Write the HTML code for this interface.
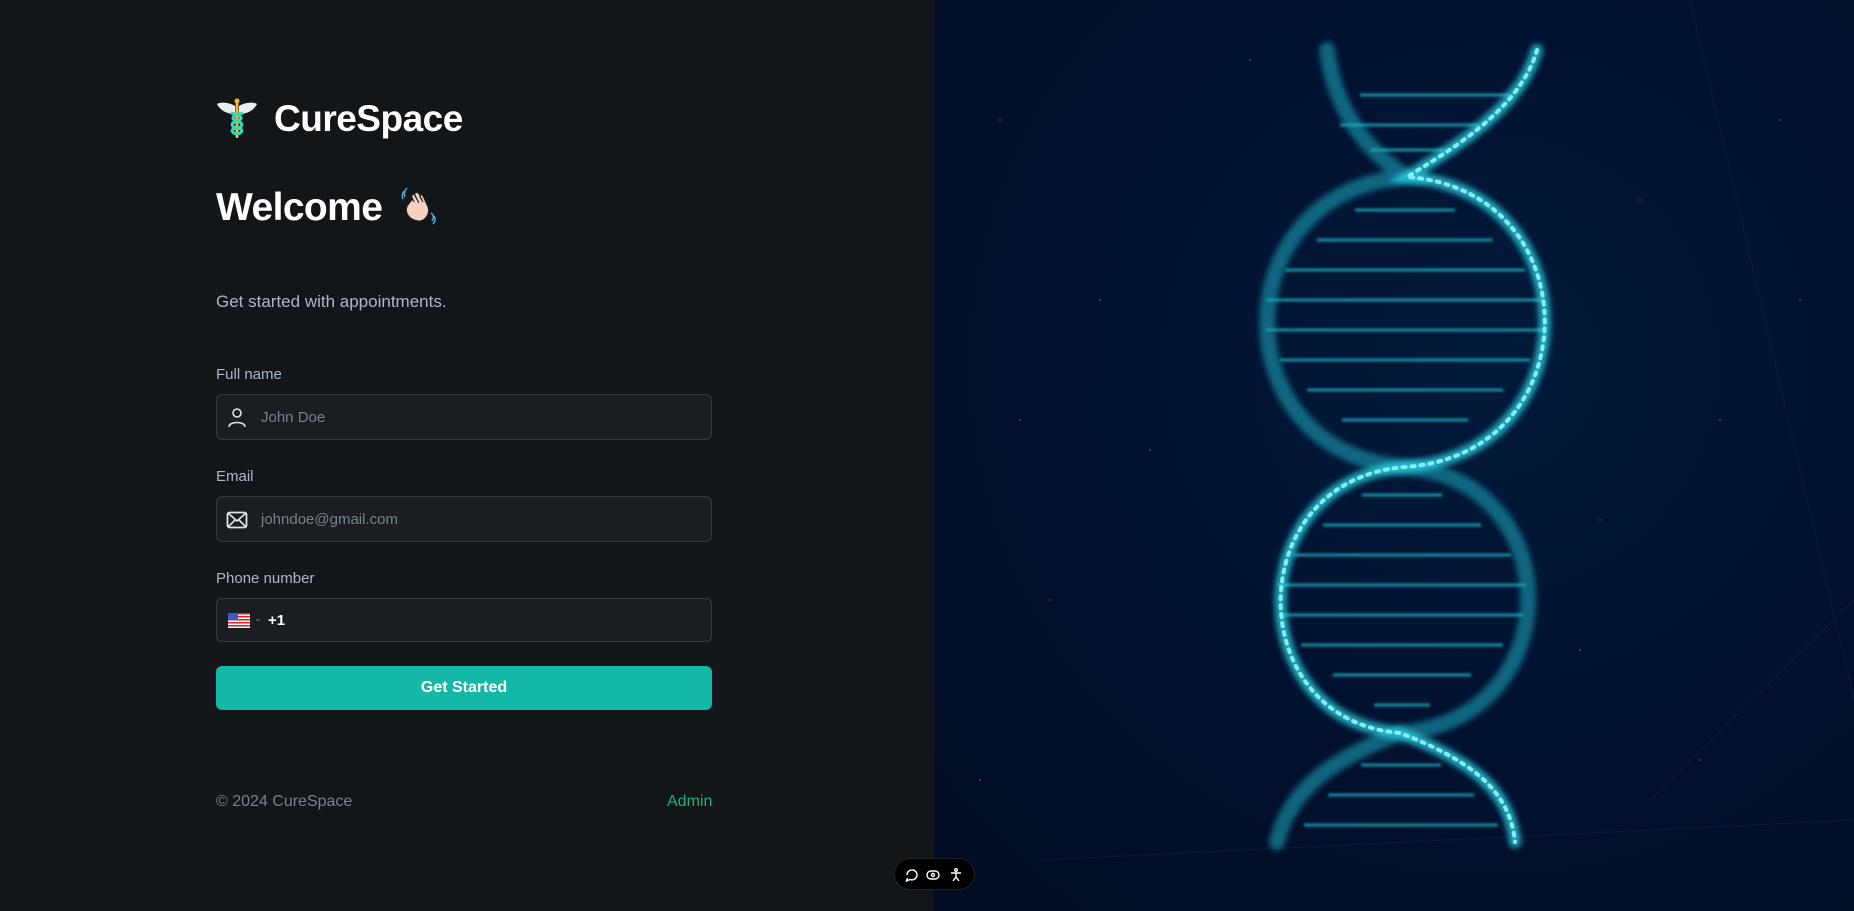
<!DOCTYPE html>
<html><head><meta charset="utf-8">
<style>
*{margin:0;padding:0;box-sizing:border-box}
body{width:1854px;height:911px;overflow:hidden;background:#131619;font-family:"Liberation Sans",sans-serif;position:relative}
.left{position:absolute;left:0;top:0;width:934px;height:911px;background:#131619}
.right{position:absolute;left:934px;top:0;width:920px;height:911px;background:radial-gradient(ellipse at 60% 40%,#021a3a 0%,#011230 45%,#010c22 100%)}
.abs{position:absolute}
.logo{left:216px;top:98px;display:flex;align-items:center}
.logo span{color:#fff;font-size:37px;font-weight:bold;margin-left:16px;letter-spacing:-0.5px}
.welcome{left:216px;top:186px;color:#fff;font-size:39px;font-weight:bold;letter-spacing:-0.6px}
.sub{left:216px;top:292px;color:#abb8c4;font-size:17px}
.lbl{left:216px;color:#abb8c4;font-size:15px}
.inp{left:216px;width:496px;background:#1a1d21;border:1px solid #363a3d;border-radius:6px}
.ph{position:absolute;left:44px;color:#76828d;font-size:15px}
.btn{left:216px;top:666px;width:496px;height:44px;background:#13b8a8;border-radius:6px;color:#fff;font-weight:bold;font-size:16px;text-align:center;line-height:44px}
.foot{top:793px;color:#76828d;font-size:16px}
</style></head><body>
<div class="left">
<div class="abs logo">
<svg width="42" height="42" viewBox="0 0 42 42">
<path d="M19 8 C12 4 4 4 1 6 C4 12 10 16 19 16Z" fill="#e8eef2"/>
<path d="M23 8 C30 4 38 4 41 6 C38 12 32 16 23 16Z" fill="#e8eef2"/>
<rect x="19.5" y="2" width="3" height="38" rx="1.5" fill="#f5b731"/>
<circle cx="21" cy="3" r="2.5" fill="#f5b731"/>
<path d="M15 15 C26 17 28 21 21 23 C14 25 15 29 21 30 C28 31 27 35 21 36" stroke="#3ed6b0" stroke-width="3" fill="none"/>
<path d="M27 15 C16 17 14 21 21 23 C28 25 27 29 21 30 C14 31 15 35 21 36" stroke="#3ed6b0" stroke-width="3" fill="none"/>
</svg>
<span>CureSpace</span></div>
<div class="abs welcome">Welcome</div>
<svg class="abs" style="left:398px;top:185px" width="42" height="42" viewBox="0 0 42 42">
<path d="M6 6 C4 9 4 12 5 14" stroke="#5aa8d6" stroke-width="1.5" fill="none"/>
<path d="M9 3 C6 6 6 9 7 12" stroke="#5aa8d6" stroke-width="1.5" fill="none"/>
<path d="M14 34 C8 30 7 24 10 20 L13 16 C14 14 16 15 16 17 L14 12 C13 10 16 8 17 11 L21 18 L17 10 C16 8 19 6 21 9 L25 17 L22 12 C21 10 24 9 25 11 L30 22 C32 28 28 35 22 36 C19 36 16 35 14 34Z" fill="#f7d0c4" stroke="#222" stroke-width="1"/>
<path d="M33 28 C36 30 36 33 34 36" stroke="#5aa8d6" stroke-width="1.5" fill="none"/>
<path d="M36 31 C38 34 37 37 35 39" stroke="#5aa8d6" stroke-width="1.5" fill="none"/>
</svg>
<div class="abs sub">Get started with appointments.</div>
<div class="abs lbl" style="top:366px">Full name</div>
<div class="abs inp" style="top:394px;height:46px">
<svg class="abs" style="left:10px;top:12px" width="20" height="22" viewBox="0 0 20 22"><circle cx="10" cy="6" r="4" stroke="#dfe4e8" stroke-width="1.6" fill="none"/><path d="M2 20 C2 14 18 14 18 20" stroke="#dfe4e8" stroke-width="1.6" fill="none"/></svg>
<div class="ph" style="top:14px">John Doe</div></div>
<div class="abs lbl" style="top:468px">Email</div>
<div class="abs inp" style="top:496px;height:46px">
<svg class="abs" style="left:9px;top:14px" width="22" height="18" viewBox="0 0 22 18"><rect x="1.5" y="1.5" width="19" height="15" rx="2" stroke="#dfe4e8" stroke-width="1.8" fill="none"/><path d="M2 2 L11 10 L20 2 M2 16 L9 9 M20 16 L13 9" stroke="#dfe4e8" stroke-width="1.6" fill="none"/></svg>
<div class="ph" style="top:14px">johndoe@gmail.com</div></div>
<div class="abs lbl" style="top:570px">Phone number</div>
<div class="abs inp" style="top:598px;height:44px">
<svg class="abs" style="left:11px;top:14px" width="22" height="15" viewBox="0 0 22 15"><rect width="22" height="15" fill="#fff"/><g fill="#d22"><rect y="0" width="22" height="1.5"/><rect y="3" width="22" height="1.5"/><rect y="6" width="22" height="1.5"/><rect y="9" width="22" height="1.5"/><rect y="12" width="22" height="1.5"/></g><rect width="10" height="7.5" fill="#3c5bbf"/></svg>
<div class="abs" style="left:37px;top:14px;color:#76828d;font-size:9px">⌄</div>
<div class="abs" style="left:51px;top:13px;color:#fff;font-size:15px;font-weight:bold">+1</div></div>
<div class="abs btn">Get Started</div>
<div class="abs foot" style="left:216px">© 2024 CureSpace</div>
<div class="abs foot" style="left:667px;color:#24ae7c">Admin</div>
</div>
<div class="right"></div>
<svg class="abs" style="left:0;top:0" width="1854" height="911" viewBox="0 0 1854 911">
<defs><filter id="g"><feGaussianBlur stdDeviation="3"/></filter><filter id="g2"><feGaussianBlur stdDeviation="1.2"/></filter></defs>
<g stroke="#1a3a66" stroke-width="1" opacity="0.3"><line x1="1690" y1="0" x2="1854" y2="700"/><line x1="1650" y1="800" x2="1854" y2="600"/><line x1="1040" y1="860" x2="1854" y2="820"/></g>
<g fill="#4a7fb0" opacity="0.6"><circle cx="1000" cy="120" r="1"/><circle cx="1100" cy="300" r="1"/><circle cx="1640" cy="200" r="1"/><circle cx="1720" cy="420" r="1"/><circle cx="1580" cy="650" r="1"/><circle cx="1050" cy="600" r="1"/><circle cx="980" cy="780" r="1"/><circle cx="1780" cy="120" r="1"/><circle cx="1700" cy="760" r="1"/><circle cx="1150" cy="450" r="1"/><circle cx="1250" cy="60" r="1"/><circle cx="1600" cy="520" r="1"/><circle cx="1020" cy="420" r="1"/><circle cx="1800" cy="300" r="1"/></g>
<g filter="url(#g2)" stroke="#22b6c8" stroke-width="3" opacity="0.75">
<line x1="1360" y1="95" x2="1510" y2="95"/><line x1="1340" y1="125" x2="1480" y2="125"/><line x1="1370" y1="150" x2="1445" y2="150"/>
<line x1="1355" y1="210" x2="1455" y2="210"/><line x1="1317" y1="240" x2="1493" y2="240"/><line x1="1285" y1="270" x2="1525" y2="270"/><line x1="1267" y1="300" x2="1543" y2="300"/><line x1="1266" y1="330" x2="1544" y2="330"/><line x1="1280" y1="360" x2="1530" y2="360"/><line x1="1307" y1="390" x2="1503" y2="390"/><line x1="1342" y1="420" x2="1468" y2="420"/>
<line x1="1362" y1="495" x2="1442" y2="495"/><line x1="1323" y1="525" x2="1481" y2="525"/><line x1="1293" y1="555" x2="1511" y2="555"/><line x1="1278" y1="585" x2="1526" y2="585"/><line x1="1281" y1="615" x2="1523" y2="615"/><line x1="1301" y1="645" x2="1503" y2="645"/><line x1="1333" y1="675" x2="1471" y2="675"/><line x1="1374" y1="705" x2="1430" y2="705"/>
<line x1="1361" y1="765" x2="1441" y2="765"/><line x1="1328" y1="795" x2="1474" y2="795"/><line x1="1304" y1="825" x2="1498" y2="825"/>
</g>
<g fill="none" stroke-linecap="round">
<path d="M1327 50 C1335 110 1365 150 1407 177 C1221 190 1221 454 1405 467 C1570 480 1570 720 1400 733 C1330 760 1290 790 1277 842" stroke="#1aa8c0" stroke-width="16" opacity="0.55" filter="url(#g)"/>
<path d="M1537 50 C1520 110 1450 150 1407 177 C1591 190 1591 454 1405 467 C1240 480 1240 720 1400 733 C1470 760 1510 790 1515 842" stroke="#2fe0f0" stroke-width="12" opacity="0.7" filter="url(#g)"/>
<path d="M1537 50 C1520 110 1450 150 1407 177 C1591 190 1591 454 1405 467 C1240 480 1240 720 1400 733 C1470 760 1510 790 1515 842" stroke="#8ff5ff" stroke-width="4" stroke-dasharray="3 6" opacity="0.9"/>
</g>
</svg>
<div class="abs" style="left:894px;top:858px;width:81px;height:32px;border-radius:16px;background:#000;border:1px solid #222">
<svg class="abs" style="left:10px;top:9px" width="60" height="14" viewBox="0 0 60 14" fill="none" stroke="#fff" stroke-width="1.4"><path d="M2 7 a5 5 0 1 1 3 4.5 L1.5 13 L2.5 10"/><rect x="22" y="3" width="12" height="8" rx="4"/><circle cx="28" cy="7" r="1.5"/><circle cx="51" cy="2" r="1.3"/><path d="M46 5 L56 5 M51 5 L51 9 L48 13 M51 9 L54 13"/></svg>
</div>
</body></html>
